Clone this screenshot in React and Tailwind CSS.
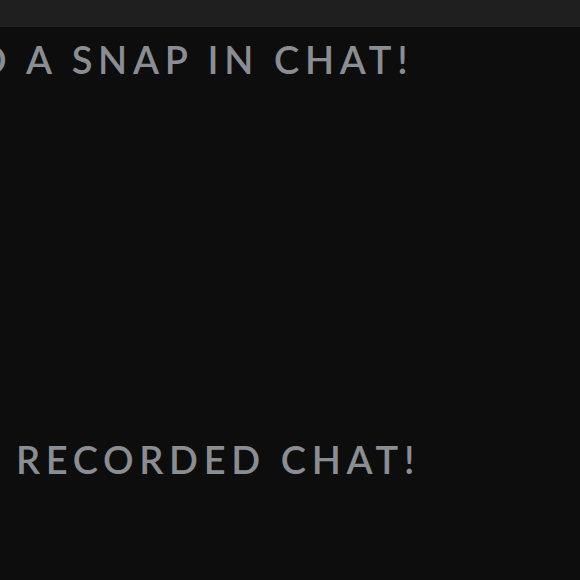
const lines = [
  { text: 'SAVED A SNAP IN CHAT!', shift: 'ml-[-137px]' },
  { text: 'RECORDED CHAT!', shift: 'ml-[16px]' },
];

const App = () => {
  return (
    <div className="w-[580px] h-[580px] bg-[#0d0d0d] overflow-hidden flex flex-col font-['Lato',_'Liberation_Sans',_sans-serif]">
      <div className="h-[27px] shrink-0 bg-[#1f1f1f]" />
      <div className="flex flex-col pt-[13px] gap-[362px]">
        {lines.map((line) => (
          <p
            key={line.text}
            className={`${line.shift} whitespace-nowrap text-[38px] leading-[38px] font-semibold tracking-[5.65px] text-[#8a8d93]`}
          >
            {line.text}
          </p>
        ))}
      </div>
    </div>
  );
};

export default App;
